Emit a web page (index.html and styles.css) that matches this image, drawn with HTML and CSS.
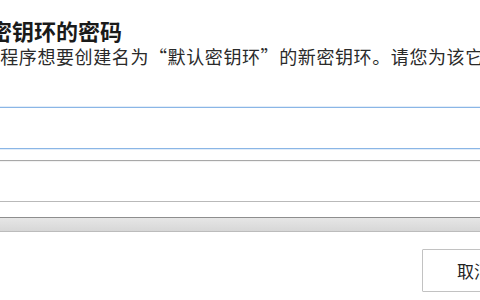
FILE: index.html
```html
<!DOCTYPE html>
<html lang="zh-CN">
<head>
  <meta charset="UTF-8">
  <title>密钥环的密码</title>
  <link rel="stylesheet" href="styles.css">
</head>
<body>
  <!-- Password dialog for a new keyring -->
  <div class="dialog">
    <h1 class="title">为新密钥环的密码</h1>
    <p class="message">某个程序想要创建名为<span class="quote">“</span>默认密钥环<span class="quote">”</span>的新密钥环。请您为该它选择要使用的解锁密码。</p>

    <div class="fields">
      <input class="field field-focus" type="password">
      <input class="field" type="password">
      <div class="strength"></div>
    </div>

    <div class="actions">
      <button class="btn">取消</button>
      <button class="btn">继续</button>
    </div>
  </div>
</body>
</html>
```

FILE: styles.css
```css
/* Base */
* {
  margin: 0;
  padding: 0;
  box-sizing: border-box;
}
body {
  width: 480px;
  height: 300px;
  overflow: hidden;
  background: #ffffff;
  font-family: "Noto Sans CJK SC", "Noto Sans", sans-serif;
  color: #2a2a2a;
}

/* Dialog, wider than the window */
.dialog {
  width: 800px;
  margin-left: -12px;
  padding-top: 16px;
  display: flex;
  flex-direction: column;
}
.title {
  margin-left: -42px;
  font-size: 22px;
  font-weight: bold;
  line-height: 28px;
  color: #1a1a1a;
  white-space: nowrap;
}
.message {
  margin-left: -25px;
  font-size: 18px;
  letter-spacing: 0.6px;
  line-height: 24px;
  white-space: nowrap;
}
/* full-width curly quotes, as in the original dialog */
.quote {
  font-feature-settings: "fwid";
}

/* Password entries */
.fields {
  margin-top: 39px;
  display: flex;
  flex-direction: column;
}
.field {
  height: 42px;
  border: 1px solid #b9b9b9;
  border-top-color: #a8a8a8;
  background: #ffffff;
  box-shadow: inset 0 1px 1px rgba(0, 0, 0, 0.06);
  outline: none;
}
.field + .field {
  margin-top: 11px;
}
.field-focus {
  border-color: #8ab6e6;
  box-shadow: 0 0 0 1px rgba(138, 182, 230, 0.25);
}
.strength {
  margin-top: 15px;
  height: 15px;
  border: 1px solid #bcbcbc;
  border-top-color: #8e8e8e;
  background: linear-gradient(#e6e6e6, #d7d7d7);
}

/* Buttons */
.actions {
  margin-top: 17px;
  margin-left: 434px;
  display: flex;
  gap: 10px;
}
.btn {
  width: 104px;
  height: 43px;
  border: 1px solid #c2c2c2;
  border-radius: 1px;
  background: #ffffff;
  font-family: inherit;
  font-size: 17px;
  color: #222222;
}
```
